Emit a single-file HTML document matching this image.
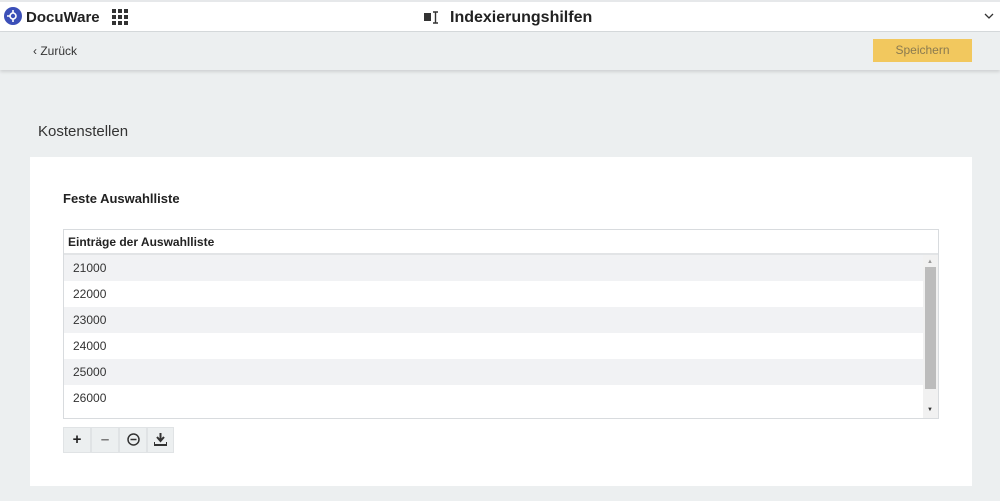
<!DOCTYPE html>
<html><head><style>
*{box-sizing:border-box;margin:0;padding:0}
body{width:1000px;height:501px;background:#eceff0;font-family:"Liberation Sans",sans-serif;color:#222;position:relative;overflow:hidden}
.top{position:absolute;left:0;top:0;width:1000px;height:32px;background:#fff;border-top:2px solid #e6e8ea;border-bottom:1px solid #d6d9dc}
.sub{position:absolute;left:0;top:32px;width:1000px;height:38px;background:#eceff0;box-shadow:0 2px 3px rgba(0,0,0,.12)}
.abs{position:absolute}
.card{position:absolute;left:30px;top:157px;width:942px;height:329px;background:#fff}
.tbl{position:absolute;left:63px;top:229px;width:876px;height:190px;border:1px solid #d8dbde;background:#fff}
.row{position:absolute;left:0;width:859px;height:26px;font-size:12px;line-height:27px;padding-left:9px;color:#333}
.btn{position:absolute;top:427px;width:28px;height:26px;background:#eceff0;border:1px solid #e0e3e5;text-align:center;line-height:24px;font-size:15px;font-weight:bold}
</style></head><body>
<div class="top"></div>
<svg class="abs" style="left:4px;top:7px" width="18" height="18" viewBox="0 0 18 18"><circle cx="9" cy="9" r="9" fill="#3b4fb8"/><circle cx="9" cy="9" r="3" fill="none" stroke="#fff" stroke-width="1.6"/><path d="M3 9h3M9 3v3M9 12v3" stroke="#fff" stroke-width="1.6"/></svg>
<div class="abs" style="left:26px;top:9px;font-size:15px;font-weight:bold;color:#222">DocuWare</div>
<svg class="abs" style="left:112px;top:9px" width="17" height="17"><g fill="#333"><rect x="0" y="0" width="4" height="4"/><rect x="6" y="0" width="4" height="4"/><rect x="12" y="0" width="4" height="4"/><rect x="0" y="6" width="4" height="4"/><rect x="6" y="6" width="4" height="4"/><rect x="12" y="6" width="4" height="4"/><rect x="0" y="12" width="4" height="4"/><rect x="6" y="12" width="4" height="4"/><rect x="0" y="12" width="4" height="4"/><rect x="12" y="12" width="4" height="4"/></g></svg>
<svg class="abs" style="left:424px;top:11px" width="16" height="14"><rect x="0" y="2" width="7" height="8" fill="#333"/><path d="M9 1h5M11.5 1v11M9 12h5" stroke="#333" stroke-width="1.4" fill="none"/></svg>
<div class="abs" style="left:450px;top:9px;font-size:16px;font-weight:bold;color:#222">Indexierungshilfen</div>
<svg class="abs" style="left:984px;top:13px" width="10" height="7"><path d="M1 1l4 4 4-4" stroke="#333" stroke-width="1.3" fill="none"/></svg>
<div class="sub"></div>
<div class="abs" style="left:33px;top:44px;font-size:12px;color:#333">‹ Zurück</div>
<div class="abs" style="left:873px;top:39px;width:99px;height:23px;background:#f2c85e;color:#8a7a50;font-size:12px;text-align:center;line-height:23px">Speichern</div>
<div class="abs" style="left:38px;top:123px;font-size:15px;color:#333">Kostenstellen</div>
<div class="card"></div>
<div class="abs" style="left:63px;top:191px;font-size:13px;font-weight:bold;color:#222">Feste Auswahlliste</div>
<div class="tbl">
<div class="abs" style="left:0;top:0;width:874px;height:25px;border-bottom:2px solid #e2e4e6;font-size:12px;font-weight:bold;line-height:24px;padding-left:4px">Einträge der Auswahlliste</div>
<div class="row" style="top:25px;background:#f1f2f4">21000</div>
<div class="row" style="top:51px">22000</div>
<div class="row" style="top:77px;background:#f1f2f4">23000</div>
<div class="row" style="top:103px">24000</div>
<div class="row" style="top:129px;background:#f1f2f4">25000</div>
<div class="row" style="top:155px">26000</div>
<div class="abs" style="left:859px;top:25px;width:15px;height:163px;background:#f1f1f1"></div>
<div class="abs" style="left:861px;top:37px;width:11px;height:122px;background:#bcbcbc"></div>
<div class="abs" style="left:863px;top:29px;font-size:6px;color:#999">▲</div>
<div class="abs" style="left:863px;top:177px;font-size:6px;color:#333">▼</div>
</div>
<div class="btn" style="left:63px">+</div>
<div class="btn" style="left:91px;color:#777">–</div>
<div class="btn" style="left:119px"><svg width="13" height="13" style="margin-top:5px"><circle cx="6.5" cy="6.5" r="5.5" fill="none" stroke="#333" stroke-width="1.5"/><path d="M3.5 6.5h6" stroke="#333" stroke-width="1.5"/></svg></div>
<div class="btn" style="left:147px;width:27px"><svg width="13" height="13" style="margin-top:5px"><path d="M6.5 0v7M3 4l3.5 4 3.5-4" stroke="#333" stroke-width="2" fill="none"/><path d="M0 9v3h13V9" stroke="#333" stroke-width="2" fill="none"/></svg></div>
</body></html>
